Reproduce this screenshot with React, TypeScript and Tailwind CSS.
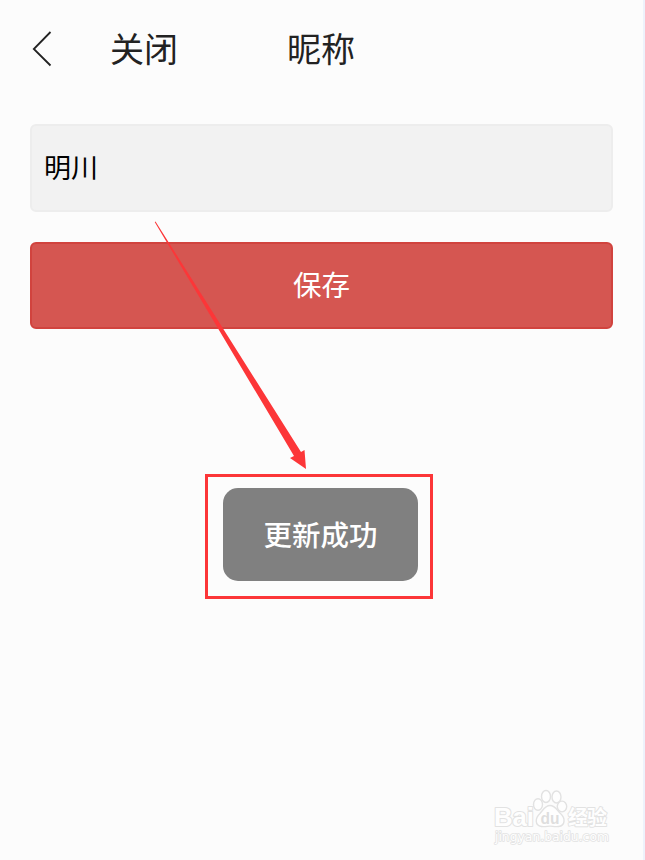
import React from 'react';

const Header: React.FC = () => (
  <header className="flex h-[98px] items-center pl-8 text-[34px] leading-none text-[#222222]">
    <button aria-label="返回" className="w-5">
      <svg viewBox="0 0 20 36" className="h-9 w-5" fill="none" stroke="currentColor" strokeWidth="1.8">
        <path d="M18.5 1 1.8 18 18.5 34.5" />
      </svg>
    </button>
    <button className="ml-[58px] w-[67px] pb-[3px] whitespace-nowrap">关闭</button>
    <h1 className="ml-[110px] pb-[3px] whitespace-nowrap">昵称</h1>
  </header>
);

const Toast: React.FC<{ message: string }> = ({ message }) => (
  <div className="mt-[145px] ml-[205px] flex h-[125px] w-[228px] border-3 border-[#fc3638] pt-[11px] pl-[15px]">
    <div className="flex h-[93px] w-[195px] items-center justify-center rounded-[15px] bg-[#808080] text-[28.5px] font-medium text-white">
      <span>{message}</span>
    </div>
  </div>
);

const Arrow: React.FC = () => (
  <svg className="pointer-events-none absolute top-0 left-0" width="645" height="860">
    <path d="M154.700 222 155.500 221.500 301 452 304.500 450 306 469 290 458 294 456Z" fill="#fc3638" />
  </svg>
);

const Watermark: React.FC = () => (
  <svg
    className="mt-auto ml-[485px] shrink-0"
    width="130"
    height="75"
    viewBox="0 0 130 75"
    fill="#fefefe"
    stroke="#e2e2e2"
    strokeWidth="1.4"
    strokeLinejoin="round"
  >
    <g fontFamily="'Liberation Sans', 'Noto Sans CJK SC', sans-serif" fontWeight="bold">
      <text x="9" y="41" fontSize="26" textLength="40" lengthAdjust="spacingAndGlyphs" strokeWidth="2" paintOrder="stroke">
        Bai
      </text>
      <ellipse cx="53" cy="19.500" rx="4.5" ry="5.8" />
      <ellipse cx="61" cy="11.500" rx="4.5" ry="6" />
      <ellipse cx="71.500" cy="12" rx="4.5" ry="6" />
      <ellipse cx="77" cy="21.500" rx="4.7" ry="5.4" />
      <path d="M65 20.500c-5 0-6.500 4-10 8-5 4.500-5.500 12 1.500 13 3.500.6 6-.4 8.500-.4s5 1 8.500.4c7-1 7-8.500 2-13C72 25 70 20.500 65 20.500Z" />
      <text x="55.500" y="39" fontSize="17" textLength="19" lengthAdjust="spacingAndGlyphs" fill="#dedede" stroke="none">
        du
      </text>
      <text x="83" y="40" fontSize="20" textLength="39" strokeWidth="1.8" paintOrder="stroke">经验</text>
      <text
        x="10"
        y="56"
        fontFamily="'DejaVu Sans', sans-serif"
        fontSize="11.5"
        fontWeight="normal"
        strokeWidth="1.5"
        paintOrder="stroke"
        textLength="114"
        lengthAdjust="spacingAndGlyphs"
      >
        jingyan.baidu.com
      </text>
    </g>
  </svg>
);

const App: React.FC = () => (
  <div className="relative flex h-[860px] w-[645px] flex-col overflow-hidden border-r-2 border-[#eef2fb] bg-[#fcfcfc] font-['Noto_Sans_CJK_SC',sans-serif]">
    <Header />
    <main className="flex flex-col">
      <div className="mx-[30px] mt-[26px] flex h-22 items-center rounded-md border-2 border-[#ededed] bg-[#f2f2f2] px-3 pb-0.5 text-[27px] text-black">
        明川
      </div>
      <button className="mx-[30px] mt-[30px] flex h-[87px] items-center justify-center rounded-md border-2 border-[#d1433e] bg-[#d55651] pb-0.5 text-[28.5px] text-white">
        保存
      </button>
      <Toast message="更新成功" />
    </main>
    <Watermark />
    <Arrow />
  </div>
);

export default App;
